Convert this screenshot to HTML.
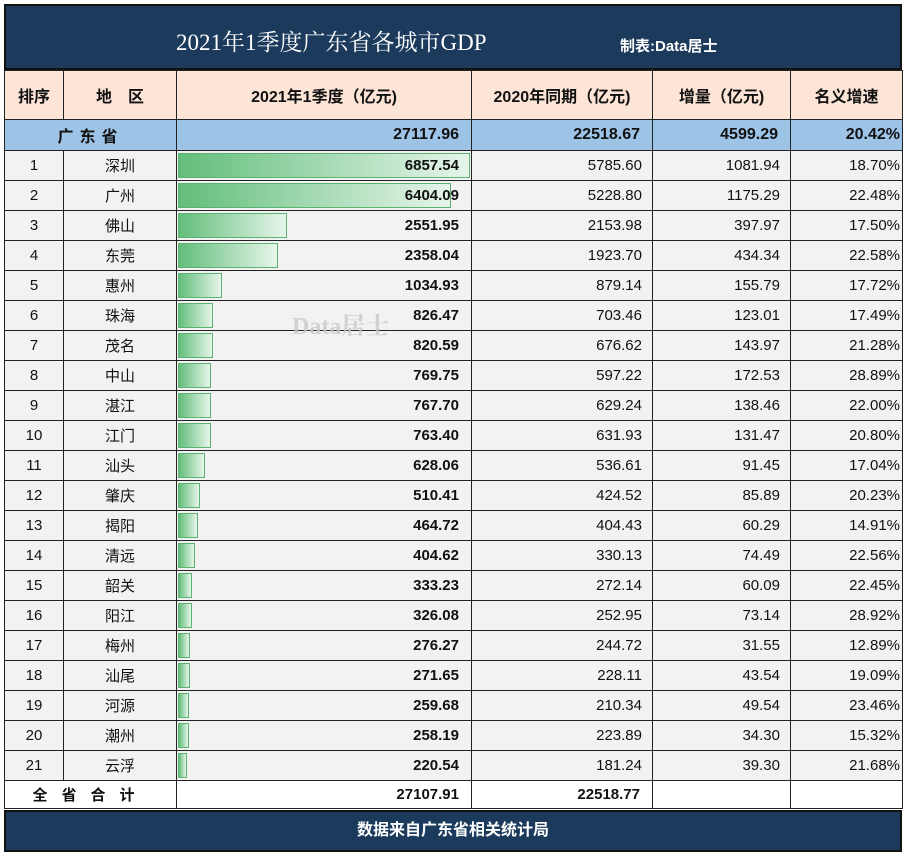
<!DOCTYPE html><html><head><meta charset="utf-8"><style>
body{margin:0;width:905px;height:855px;background:#fff;position:relative;font-family:"Liberation Sans","Noto Sans CJK SC",sans-serif;overflow:hidden}
.top{position:absolute;left:4px;top:4px;width:898px;height:66px;background:#1b3a5c;border:2px solid #111;box-sizing:border-box;color:#fff}
.t1{position:absolute;left:170px;top:18px;font-family:"Liberation Serif","Noto Serif CJK SC",serif;font-size:23px}
.t2{position:absolute;left:614px;top:29px;font-size:15px;font-weight:bold}
table{position:absolute;left:4px;top:70px;border-collapse:collapse;table-layout:fixed;width:898px}
td{border:1px solid #222;padding:0 4px;font-size:15px;height:30px;box-sizing:border-box;white-space:nowrap;background:#f2f2f2;color:#111}
td.c{text-align:center}td.r{text-align:right}
tr.h td{background:#fce4d6;height:49px;font-weight:bold;text-align:center;font-size:16px}
tr.p td{background:#9dc3e6;font-weight:bold;font-size:16px;height:31px}
td.b{font-weight:bold;position:relative;padding-right:12px}
.bar{position:absolute;left:1px;top:2px;bottom:2px;background:linear-gradient(90deg,#63be7b,#e6f5ea);border:1px solid #5bb36f;box-sizing:border-box}
td.b span{position:relative}
tr.tot td{background:#fff;font-weight:bold;height:28px}
.foot{position:absolute;left:4px;top:810px;width:898px;height:42px;background:#1b3a5c;border:2px solid #111;box-sizing:border-box;color:#fff;text-align:center;font-weight:bold;font-size:16px;line-height:38px}
.wm{position:absolute;left:292px;top:306px;font-size:24px;font-family:"Liberation Serif","Noto Serif CJK SC",serif;color:rgba(200,200,200,.8);font-weight:bold}
</style></head><body>
<div class="top"><div class="t1">2021年1季度广东省各城市GDP</div><div class="t2">制表:Data居士</div></div>
<table>
<colgroup><col style="width:59px"><col style="width:113px"><col style="width:295px"><col style="width:181px"><col style="width:138px"><col style="width:112px"></colgroup>
<tr class="h"><td>排序</td><td>地　区</td><td>2021年1季度（亿元)</td><td>2020年同期（亿元)</td><td>增量（亿元)</td><td>名义增速</td></tr>
<tr class="p"><td colspan="2" class="c" style="letter-spacing:6px">广东省</td><td class="r" style="padding-right:12px">27117.96</td><td class="r" style="padding-right:12px">22518.67</td><td class="r" style="padding-right:12px">4599.29</td><td class="r" style="padding-right:2px">20.42%</td></tr>
<tbody id="tb"></tbody>
<tr class="tot"><td colspan="2" class="c" style="letter-spacing:14px">全省合计</td><td class="r" style="padding-right:12px">27107.91</td><td class="r" style="padding-right:12px">22518.77</td><td></td><td></td></tr>
</table>
<div class="wm">Data居士</div>
<div class="foot">数据来自广东省相关统计局</div>
<script>
var d=[["深圳","6857.54","5785.60","1081.94","18.70%"],["广州","6404.09","5228.80","1175.29","22.48%"],["佛山","2551.95","2153.98","397.97","17.50%"],["东莞","2358.04","1923.70","434.34","22.58%"],["惠州","1034.93","879.14","155.79","17.72%"],["珠海","826.47","703.46","123.01","17.49%"],["茂名","820.59","676.62","143.97","21.28%"],["中山","769.75","597.22","172.53","28.89%"],["湛江","767.70","629.24","138.46","22.00%"],["江门","763.40","631.93","131.47","20.80%"],["汕头","628.06","536.61","91.45","17.04%"],["肇庆","510.41","424.52","85.89","20.23%"],["揭阳","464.72","404.43","60.29","14.91%"],["清远","404.62","330.13","74.49","22.56%"],["韶关","333.23","272.14","60.09","22.45%"],["阳江","326.08","252.95","73.14","28.92%"],["梅州","276.27","244.72","31.55","12.89%"],["汕尾","271.65","228.11","43.54","19.09%"],["河源","259.68","210.34","49.54","23.46%"],["潮州","258.19","223.89","34.30","15.32%"],["云浮","220.54","181.24","39.30","21.68%"]];
var h="";d.forEach(function(r,i){var w=Math.round(parseFloat(r[1])*292/6857.54);h+='<tr><td class="c">'+(i+1)+'</td><td class="c">'+r[0]+'</td><td class="r b"><div class="bar" style="width:'+w+'px"></div><span>'+r[1]+'</span></td><td class="r" style="padding-right:10px">'+r[2]+'</td><td class="r" style="padding-right:10px">'+r[3]+'</td><td class="r" style="padding-right:2px">'+r[4]+'</td></tr>';});
document.getElementById("tb").innerHTML=h;
</script>
</body></html>
